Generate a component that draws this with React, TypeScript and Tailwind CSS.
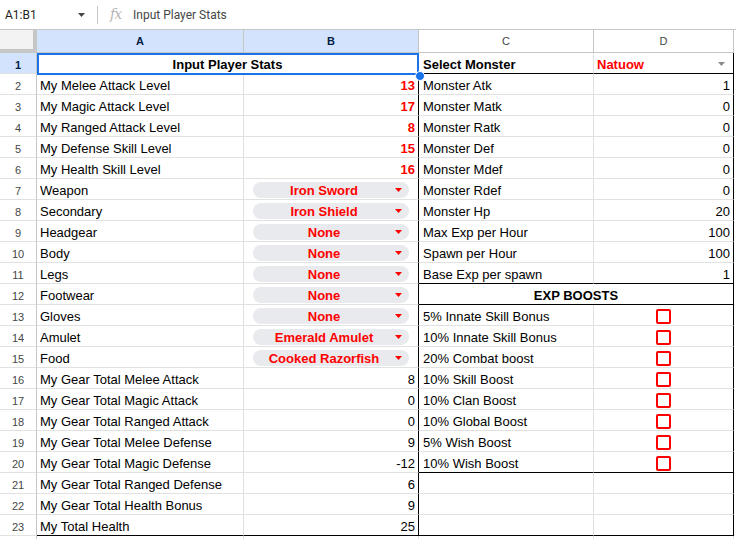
import React from "react";

const GRID = "grid grid-cols-[37px_207px_175px_175px_140px]";
const LIGHT = "border-[#e1e1e1]";

type Chip = { chip: string };
type BVal = { v: string; red?: boolean } | Chip | null;

const left: { a: string; b: BVal }[] = [
  { a: "My Melee Attack Level", b: { v: "13", red: true } },
  { a: "My Magic Attack Level", b: { v: "17", red: true } },
  { a: "My Ranged Attack Level", b: { v: "8", red: true } },
  { a: "My Defense Skill Level", b: { v: "15", red: true } },
  { a: "My Health Skill Level", b: { v: "16", red: true } },
  { a: "Weapon", b: { chip: "Iron Sword" } },
  { a: "Secondary", b: { chip: "Iron Shield" } },
  { a: "Headgear", b: { chip: "None" } },
  { a: "Body", b: { chip: "None" } },
  { a: "Legs", b: { chip: "None" } },
  { a: "Footwear", b: { chip: "None" } },
  { a: "Gloves", b: { chip: "None" } },
  { a: "Amulet", b: { chip: "Emerald Amulet" } },
  { a: "Food", b: { chip: "Cooked Razorfish" } },
  { a: "My Gear Total Melee Attack", b: { v: "8" } },
  { a: "My Gear Total Magic Attack", b: { v: "0" } },
  { a: "My Gear Total Ranged Attack", b: { v: "0" } },
  { a: "My Gear Total Melee Defense", b: { v: "9" } },
  { a: "My Gear Total Magic Defense", b: { v: "-12" } },
  { a: "My Gear Total Ranged Defense", b: { v: "6" } },
  { a: "My Gear Total Health Bonus", b: { v: "9" } },
  { a: "My Total Health", b: { v: "25" } },
];

type Right = { c: string; d?: string; check?: boolean; merged?: boolean } | null;
const right: Right[] = [
  { c: "Monster Atk", d: "1" },
  { c: "Monster Matk", d: "0" },
  { c: "Monster Ratk", d: "0" },
  { c: "Monster Def", d: "0" },
  { c: "Monster Mdef", d: "0" },
  { c: "Monster Rdef", d: "0" },
  { c: "Monster Hp", d: "20" },
  { c: "Max Exp per Hour", d: "100" },
  { c: "Spawn per Hour", d: "100" },
  { c: "Base Exp per spawn", d: "1" },
  { c: "EXP BOOSTS", merged: true },
  { c: "5% Innate Skill Bonus", check: true },
  { c: "10% Innate Skill Bonus", check: true },
  { c: "20% Combat boost", check: true },
  { c: "10% Skill Boost", check: true },
  { c: "10% Clan Boost", check: true },
  { c: "10% Global Boost", check: true },
  { c: "5% Wish Boost", check: true },
  { c: "10% Wish Boost", check: true },
  null,
  null,
  null,
];

function Caret({ color, cls }: { color: string; cls?: string }) {
  return (
    <svg width="7" height="4" viewBox="0 0 7 4" className={cls}>
      <path d="M0 0 L7 0 L3.5 4 Z" fill={color} />
    </svg>
  );
}

function RowHead({ n, sel }: { n?: number; sel?: boolean }) {
  return (
    <div
      className={`h-[21px] flex items-end justify-center pb-[2px] border-r border-r-[#c4c7c5] border-b border-b-[#e1e1e1] text-[11px] leading-[12px] ${
        sel ? "bg-[#d3e3fd] text-[#041e49] font-bold" : "bg-white text-[#444746]"
      }`}
    >
      {n}
    </div>
  );
}

export default function App() {
  const blackBottom = (n: number) => n === 11 || n === 12 || n === 20 || n === 23;
  return (
    <div className="w-[736px] h-[539px] overflow-hidden bg-white font-['Liberation_Sans',Arial,sans-serif] text-[13px] text-black">
      {/* formula bar */}
      <div className="h-[30px] flex items-center border-b border-[#c4c7c5] font-['Roboto',Arial,sans-serif] text-[12px]">
        <div className="w-[97px] flex items-center pl-[5px] pr-[12px] justify-between text-[#1f1f1f]">
          <span>A1:B1</span>
          <Caret color="#444746" />
        </div>
        <div className="w-px h-[18px] bg-[#c4c7c5]" />
        <span className="ml-[12px] w-[20px] font-['DejaVu_Serif',serif] italic text-[14px] text-[#b4b4b4] tracking-[-1px]">fx</span>
        <span className="ml-[3px] text-[#444746]">Input Player Stats</span>
      </div>

      <div className="relative">
        {/* column header */}
        <div className={`${GRID} h-[23px] text-[11px]`}>
          <div className="bg-[#f3f3f3] border-r-4 border-b-4 border-[#c4c7c5]" />
          <div className="bg-[#d3e3fd] flex items-center justify-center pt-[1px] border-r border-b border-[#c4c7c5] text-[#041e49] font-bold">A</div>
          <div className="bg-[#d3e3fd] flex items-center justify-center pt-[1px] border-r border-b border-[#c4c7c5] text-[#041e49] font-bold">B</div>
          <div className="bg-white flex items-center justify-center pt-[1px] border-r border-b border-[#c4c7c5] text-[#444746]">C</div>
          <div className="bg-white flex items-center justify-center pt-[1px] border-r border-b border-[#c4c7c5] text-[#444746]">D</div>
        </div>

        {/* row 1 */}
        <div className={GRID}>
          <RowHead n={1} sel />
          <div className={`col-span-2 h-[21px] flex items-end justify-center pb-[1px] leading-[15px] font-bold border-r border-b ${LIGHT}`}>
            Input Player Stats
          </div>
          <div className="h-[21px] flex items-end pl-[4px] pb-[1px] leading-[15px] font-bold border-r border-r-[#e1e1e1] border-b border-b-black">
            Select Monster
          </div>
          <div className="h-[21px] flex items-end justify-between pl-[3px] pr-[8px] pb-[1px] leading-[15px] font-bold text-[#ff0000] border-r border-r-black border-b border-b-black">
            <span>Natuow</span>
            <Caret color="#8a8a8a" cls="mb-[6px]" />
          </div>
        </div>

        {left.map((row, i) => {
          const n = i + 2;
          const r = right[i];
          const bb = n === 23 ? "border-b-black" : "border-b-[#e1e1e1]";
          const rb = blackBottom(n) ? "border-b-black" : "border-b-[#e1e1e1]";
          const b = row.b;
          return (
            <div key={n} className={GRID}>
              <RowHead n={n} />
              <div className={`h-[21px] flex items-end pl-[3px] pb-[1px] leading-[15px] whitespace-nowrap border-r border-r-[#e1e1e1] border-b ${bb}`}>
                {row.a}
              </div>
              <div className={`h-[21px] border-r border-r-black border-b ${bb}`}>
                {b && "chip" in b ? (
                  <div className="mt-[3px] ml-[9px] mr-[9px] h-[16px] rounded-full bg-[#e8eaed] flex items-center pr-[7px]">
                    <span className="flex-1 text-center font-bold text-[#ff0000] leading-[16px] pt-[1px]">{b.chip}</span>
                    <Caret color="#ff0000" />
                  </div>
                ) : b ? (
                  <div className={`h-full flex items-end justify-end pr-[3px] pb-[1px] leading-[15px] ${b.red ? "text-[#ff0000] font-bold" : ""}`}>
                    {b.v}
                  </div>
                ) : null}
              </div>
              {r && r.merged ? (
                <div className={`col-span-2 h-[21px] flex items-end justify-center pb-[1px] leading-[15px] font-bold border-r border-r-black border-b ${rb}`}>
                  {r.c}
                </div>
              ) : (
                <>
                  <div className={`h-[21px] flex items-end pl-[4px] pb-[1px] leading-[15px] whitespace-nowrap border-r border-r-[#e1e1e1] border-b ${rb}`}>
                    {r ? r.c : ""}
                  </div>
                  <div className={`h-[21px] flex items-end justify-end pr-[3px] pb-[1px] leading-[15px] border-r border-r-black border-b ${rb}`}>
                    {r && r.check ? (
                      <div className="w-full flex justify-center mb-[0px]">
                        <div className="w-[15px] h-[15px] border-2 border-[#ff0000] rounded-[2px] ml-[3px]" />
                      </div>
                    ) : r && r.d ? (
                      r.d
                    ) : null}
                  </div>
                </>
              )}
            </div>
          );
        })}

        {/* row 24 (only the top is visible) */}
        <div className={GRID}>
          <RowHead />
          <div className={`h-[21px] border-r border-b ${LIGHT}`} />
          <div className={`h-[21px] border-r border-b ${LIGHT}`} />
          <div className={`h-[21px] border-r border-b ${LIGHT}`} />
          <div className={`h-[21px] border-r border-b ${LIGHT}`} />
        </div>

        {/* selection */}
        <div className="absolute left-[37px] top-[23px] w-[382px] h-[22px] border-2 border-[#1a73e8] pointer-events-none" />
        <div className="absolute left-[415px] top-[41px] w-[8px] h-[8px] rounded-full bg-[#1a73e8] border border-white box-content" />
      </div>
    </div>
  );
}
